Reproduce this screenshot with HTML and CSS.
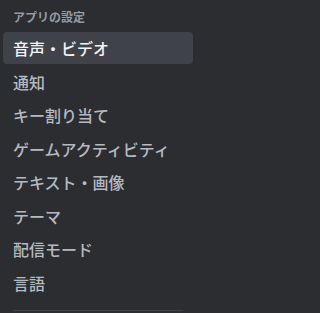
FILE: index.html
```html
<!DOCTYPE html>
<html lang="ja">
<head>
<meta charset="utf-8">
<link rel="stylesheet" href="styles.css">
</head>
<body>
<nav class="side">
  <div class="header">アプリの設定</div>
  <div class="item selected">音声・ビデオ</div>
  <div class="item">通知</div>
  <div class="item">キー割り当て</div>
  <div class="item">ゲームアクティビティ</div>
  <div class="item">テキスト・画像</div>
  <div class="item">テーマ</div>
  <div class="item">配信モード</div>
  <div class="item">言語</div>
  <div class="divider"></div>
</nav>
</body>
</html>
```
FILE: styles.css
```css
html, body {
  margin: 0;
  padding: 0;
  background: #2b2d31;
  width: 200px;
  height: 313px;
  overflow: hidden;
}
.side {
  display: flex;
  flex-direction: column;
  padding: 4px 7px 0 3px;
  font-family: "Noto Sans CJK JP", "Noto Sans", sans-serif;
}
.header {
  padding: 5px 10px 7px;
  font-size: 12px;
  line-height: 16px;
  font-weight: 700;
  color: #949ba4;
}
.item {
  height: 32px;
  line-height: 32px;
  padding: 0 10px;
  margin-bottom: 1.5px;
  border-radius: 4px;
  font-size: 16px;
  font-weight: 500;
  color: #b5bac1;
  white-space: nowrap;
}
.item.selected {
  background: #404249;
  color: #f2f3f5;
}
.divider {
  height: 1px;
  margin: 10px 10px 0;
  background: #3f4147;
}
```
